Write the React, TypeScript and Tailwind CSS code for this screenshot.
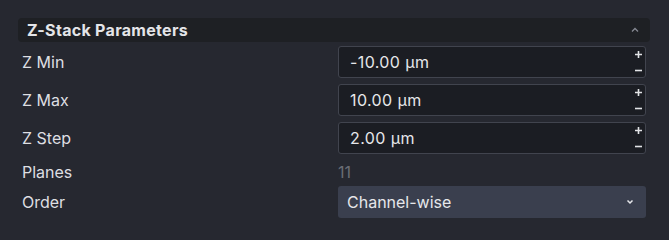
import { useState } from 'react';

interface NumberRowProps {
  label: string;
  value: string;
}

function NumberRow({ label, value }: NumberRowProps) {
  return (
    <div className="grid grid-cols-[320px_308px] items-center h-[32px]">
      <div className="pl-[4px] text-[16px] text-[#dedfe2]">{label}</div>
      <div className="relative h-[32px] rounded-[3px] border border-[#41444e] bg-[#1b1d23] flex items-center pl-[11px]">
        <span className="text-[16px] tracking-[0.4px] text-[#e6e7ea]">{value}</span>
        <div className="absolute right-[2px] top-0 bottom-0 flex flex-col justify-between py-[2px] w-[10px] items-center">
          <svg width="9" height="9" viewBox="0 0 9 9" className="mt-[1px]">
            <path d="M4.5 1v7M1 4.5h7" stroke="#e2e3e6" strokeWidth="1.6" />
          </svg>
          <svg width="9" height="9" viewBox="0 0 9 9">
            <path d="M1 4.5h7" stroke="#e2e3e6" strokeWidth="1.6" />
          </svg>
        </div>
      </div>
    </div>
  );
}

export default function App() {
  const [order] = useState('Channel-wise');

  return (
    <div
      className="w-[669px] h-[240px] bg-[#262830] pt-[18px] pl-[18px] pr-[19px] overflow-hidden"
      style={{ fontFamily: 'Inter, "Noto Sans", sans-serif' }}
    >
      <div className="h-[24px] rounded-[4px] bg-[#1e2024] flex items-center justify-between pl-[9px] pr-[11px]">
        <span className="text-[16px] font-bold text-[#e4e5e8] tracking-[0.3px]">Z-Stack Parameters</span>
        <svg width="8" height="6" viewBox="0 0 8 6">
          <path d="M1 4.5L4 1.5L7 4.5" fill="none" stroke="#858892" strokeWidth="1.3" />
        </svg>
      </div>

      <div className="mt-[4px] flex flex-col gap-[6px]">
        <NumberRow label="Z Min" value="-10.00 µm" />
        <NumberRow label="Z Max" value="10.00 µm" />
        <NumberRow label="Z Step" value="2.00 µm" />

        <div className="grid grid-cols-[320px_308px] items-center h-[20px]">
          <div className="pl-[4px] text-[16px] text-[#dedfe2]">Planes</div>
          <div className="text-[16px] text-[#6b6e76]">11</div>
        </div>

        <div className="grid grid-cols-[320px_308px] items-center h-[32px]">
          <div className="pl-[4px] text-[16px] text-[#dedfe2]">Order</div>
          <div className="h-[32px] rounded-[3px] bg-[#3a3f4e] flex items-center justify-between pl-[9px] pr-[12px]">
            <span className="text-[16px] text-[#e6e7ea]">{order}</span>
            <svg width="8" height="6" viewBox="0 0 8 6">
              <path d="M1.5 1.5L4 4L6.5 1.5" fill="none" stroke="#e6e7ea" strokeWidth="1.5" />
            </svg>
          </div>
        </div>
      </div>
    </div>
  );
}
